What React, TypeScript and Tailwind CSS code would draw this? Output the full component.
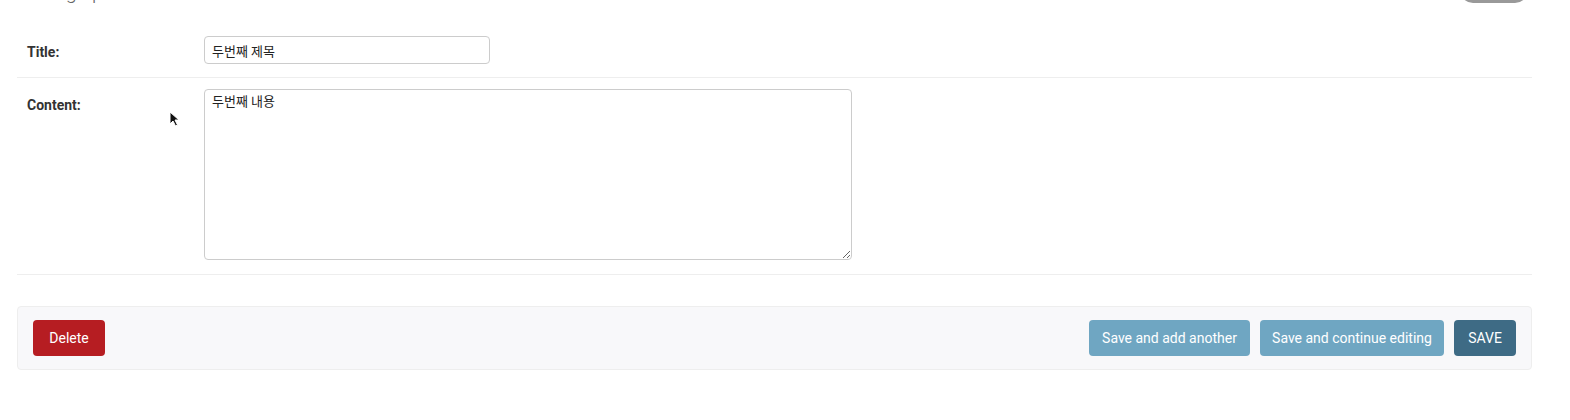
import React from "react";

const font = { fontFamily: 'Roboto, "Noto Sans CJK KR", "Liberation Sans", sans-serif' };

export default function App() {
  return (
    <div className="relative w-[1570px] h-[420px] bg-white overflow-hidden text-[#333]" style={font}>
      {/* cut-off header */}
      <div className="flex justify-between items-start h-[26px] pl-[20px] pr-[42px]">
        <h1 className="-mt-[20px] text-[20px] leading-[24px] font-light text-[#666]">Change post</h1>
        <div className="-mt-[23px] w-[68px] h-[26px] rounded-[15px] bg-[#999]" />
      </div>

      <div className="pl-[17px] pr-[38px]">
        {/* Title row */}
        <div className="flex items-start px-[10px] pt-[10px] pb-[13px] border-b border-[#eee]">
          <label className="w-[177px] pt-[6px] text-[14px] leading-[20px] font-bold text-[#333]">Title:</label>
          <input
            readOnly
            defaultValue="두번째 제목"
            className="w-[286px] h-[28px] px-[7px] border border-[#ccc] rounded-[4px] text-[13px] text-[#222] outline-none"
            style={font}
          />
        </div>

        {/* Content row */}
        <div className="flex items-start px-[10px] pt-[11px] pb-[14px] border-b border-[#eee]">
          <label className="w-[177px] pt-[6px] text-[14px] leading-[20px] font-bold text-[#333]">Content:</label>
          <textarea
            readOnly
            defaultValue="두번째 내용"
            className="w-[648px] h-[171px] px-[7px] py-[2px] border border-[#ccc] rounded-[4px] text-[13px] leading-[20px] text-[#222] outline-none resize"
            style={font}
          />
        </div>

        {/* Submit row */}
        <div className="mt-[31px] flex items-center justify-between px-[15px] py-[13px] bg-[#f8f8fa] border border-[#eee] rounded-[4px]">
          <button className="w-[72px] h-[36px] rounded-[4px] bg-[#b61d22] text-white text-[14px]">Delete</button>
          <div className="flex gap-[10px]">
            <button className="w-[161px] h-[36px] rounded-[4px] bg-[#6fa6c2] text-white text-[14px]">Save and add another</button>
            <button className="w-[184px] h-[36px] rounded-[4px] bg-[#6fa6c2] text-white text-[14px]">Save and continue editing</button>
            <button className="w-[62px] h-[36px] rounded-[4px] bg-[#3e6b85] text-white text-[14px]">SAVE</button>
          </div>
        </div>
      </div>

      {/* mouse cursor overlay */}
      <svg className="absolute left-[169px] top-[111px]" width="11" height="16" viewBox="0 0 11 16">
        <path d="M1 1 L1 13 L4 10 L6.5 15 L8.5 14 L6 9 L10 9 Z" fill="#111" stroke="#fff" strokeWidth="1" />
      </svg>
    </div>
  );
}
